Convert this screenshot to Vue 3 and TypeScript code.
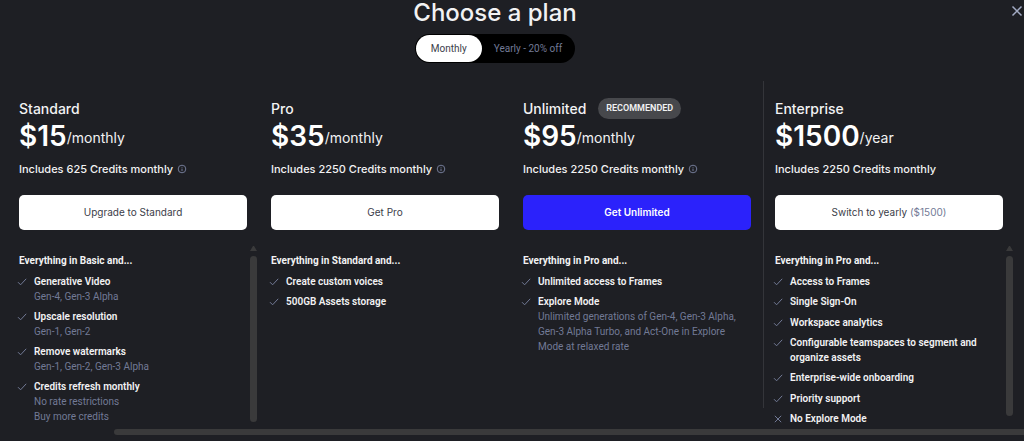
<script setup lang="ts">
import { ref } from 'vue'

interface Feature {
  title: string
  details?: string[]
  excluded?: boolean
}

interface Plan {
  id: string
  name: string
  price: string
  period: string
  credits: string
  info: boolean
  badge?: string
  action: string
  actionNote?: string
  primary?: boolean
  heading: string
  features: Feature[]
  scroll?: 'tall' | 'short'
}

const billing = ref<'monthly' | 'yearly'>('monthly')

const plans: Plan[] = [
  {
    id: 'standard',
    name: 'Standard',
    price: '$15',
    period: '/monthly',
    credits: 'Includes 625 Credits monthly',
    info: true,
    action: 'Upgrade to Standard',
    heading: 'Everything in Basic and...',
    features: [
      { title: 'Generative Video', details: ['Gen-4, Gen-3 Alpha'] },
      { title: 'Upscale resolution', details: ['Gen-1, Gen-2'] },
      { title: 'Remove watermarks', details: ['Gen-1, Gen-2, Gen-3 Alpha'] },
      { title: 'Credits refresh monthly', details: ['No rate restrictions', 'Buy more credits'] },
    ],
    scroll: 'tall',
  },
  {
    id: 'pro',
    name: 'Pro',
    price: '$35',
    period: '/monthly',
    credits: 'Includes 2250 Credits monthly',
    info: true,
    action: 'Get Pro',
    heading: 'Everything in Standard and...',
    features: [{ title: 'Create custom voices' }, { title: '500GB Assets storage' }],
  },
  {
    id: 'unlimited',
    name: 'Unlimited',
    price: '$95',
    period: '/monthly',
    credits: 'Includes 2250 Credits monthly',
    info: true,
    badge: 'RECOMMENDED',
    action: 'Get Unlimited',
    primary: true,
    heading: 'Everything in Pro and...',
    features: [
      { title: 'Unlimited access to Frames' },
      {
        title: 'Explore Mode',
        details: [
          'Unlimited generations of Gen-4, Gen-3 Alpha, Gen-3 Alpha Turbo, and Act-One in Explore Mode at relaxed rate',
        ],
      },
    ],
  },
  {
    id: 'enterprise',
    name: 'Enterprise',
    price: '$1500',
    period: '/year',
    credits: 'Includes 2250 Credits monthly',
    info: false,
    action: 'Switch to yearly',
    actionNote: '($1500)',
    heading: 'Everything in Pro and...',
    features: [
      { title: 'Access to Frames' },
      { title: 'Single Sign-On' },
      { title: 'Workspace analytics' },
      { title: 'Configurable teamspaces to segment and organize assets' },
      { title: 'Enterprise-wide onboarding' },
      { title: 'Priority support' },
      { title: 'No Explore Mode', excluded: true },
    ],
    scroll: 'short',
  },
]
</script>

<template>
  <main class="page">
    <button class="close" type="button" aria-label="Close">
      <svg viewBox="0 0 12 12" width="12" height="12" aria-hidden="true">
        <path d="M1.5 1.5 10.5 10.5M10.5 1.5 1.5 10.5" />
      </svg>
    </button>

    <header class="header">
      <h1>Choose a plan</h1>
      <div class="toggle" role="group" aria-label="Billing period">
        <button
          type="button"
          :class="{ active: billing === 'monthly' }"
          :aria-pressed="billing === 'monthly'"
          @click="billing = 'monthly'"
        >Monthly</button>
        <button
          type="button"
          :class="{ active: billing === 'yearly' }"
          :aria-pressed="billing === 'yearly'"
          @click="billing = 'yearly'"
        >Yearly - 20% off</button>
      </div>
    </header>

    <div class="plans">
      <section v-for="plan in plans" :key="plan.id" class="plan" :class="plan.id">
        <div class="name-row">
          <h2>{{ plan.name }}</h2>
          <span v-if="plan.badge" class="badge">{{ plan.badge }}</span>
        </div>
        <p class="price"><strong>{{ plan.price }}</strong><span>{{ plan.period }}</span></p>
        <p class="credits">
          <span>{{ plan.credits }}</span>
          <svg v-if="plan.info" viewBox="0 0 10 10" width="10" height="10" aria-hidden="true">
            <circle cx="5" cy="5" r="3.8" />
            <path d="M5 4.6V7.1M5 2.9V3.7" />
          </svg>
        </p>
        <button class="action" :class="{ primary: plan.primary }" type="button">
          {{ plan.action }} <span v-if="plan.actionNote">{{ plan.actionNote }}</span>
        </button>

        <div class="body">
          <div class="content">
            <h3>{{ plan.heading }}</h3>
            <ul>
              <li v-for="feature in plan.features" :key="feature.title">
                <svg viewBox="0 0 10 10" width="10" height="10" aria-hidden="true">
                  <path v-if="feature.excluded" d="M1.8 1.8 8.2 8.2M8.2 1.8 1.8 8.2" />
                  <path v-else d="M1 5.2 3.6 7.8 9.2 1.8" />
                </svg>
                <div>
                  <p class="title">{{ feature.title }}</p>
                  <p v-for="line in feature.details" :key="line" class="detail">{{ line }}</p>
                </div>
              </li>
            </ul>
          </div>
          <div v-if="plan.scroll" class="scroll" :class="plan.scroll" aria-hidden="true">
            <i class="arrow"></i>
            <i class="thumb"></i>
          </div>
        </div>
      </section>
    </div>

    <div class="h-scroll" aria-hidden="true"></div>
  </main>
</template>

<style>
body {
  margin: 0;
  background: #1e1f24;
}
</style>

<style scoped>
.page {
  position: relative;
  box-sizing: border-box;
  min-height: 100vh;
  border-bottom: 1px solid #08080a;
  background: #1e1f24;
  color: #f2f2f3;
  font-family: Inter, "Liberation Sans", sans-serif;
  font-size: 10px;
  line-height: 15px;
}

h1,
h2,
h3,
p,
ul {
  margin: 0;
  padding: 0;
}

button {
  margin: 0;
  border: 0;
  font: inherit;
  cursor: pointer;
}

svg {
  flex: none;
  fill: none;
  stroke: #727a96;
  stroke-width: 1;
}

.close {
  position: absolute;
  top: 5px;
  right: 1px;
  display: flex;
  padding: 0;
  background: none;
}

.close svg {
  stroke: #a3abc4;
  stroke-width: 1.5;
}

.header {
  display: flex;
  flex-direction: column;
  align-items: center;
  margin-right: 34px;
}

h1 {
  height: 34px;
  font-size: 24px;
  font-weight: 500;
  line-height: 25px;
}

.toggle {
  display: flex;
  box-sizing: border-box;
  height: 29px;
  padding: 1px;
  border-radius: 15px;
  background: #000;
  font-family: Roboto, "Liberation Sans", sans-serif;
}

.toggle button {
  padding: 0 12px;
  border-radius: 14px;
  background: none;
  color: #727a96;
}

.toggle .active {
  padding: 0 15px;
  background: #fff;
  color: #3b3d49;
}

.plans {
  display: grid;
  grid-template-columns: repeat(4, minmax(0, 1fr));
  gap: 24px;
  margin-top: 18px;
  padding: 0 21px 0 19px;
}

.plan {
  position: relative;
  padding-top: 16px;
}

.enterprise::before {
  position: absolute;
  top: 0;
  bottom: 18px;
  left: -12px;
  width: 1px;
  background: #34353a;
  content: "";
}

.name-row {
  display: flex;
  align-items: center;
  gap: 12px;
  height: 23px;
}

h2 {
  font-size: 14px;
  font-weight: 500;
  line-height: 20px;
}

.badge {
  padding: 3px 8px;
  border-radius: 11px;
  background: #47484c;
  font-family: Roboto, "Liberation Sans", sans-serif;
  font-size: 9px;
  font-weight: 600;
}

.price {
  display: flex;
  align-items: center;
  height: 40px;
  padding-bottom: 8px;
  box-sizing: border-box;
  line-height: 32px;
}

.price strong {
  color: #fff;
  font-size: 28px;
  font-weight: 600;
}

.price span {
  padding-top: 4px;
  font-size: 14px;
  line-height: 28px;
}

.credits {
  display: flex;
  align-items: center;
  gap: 4px;
  height: 18px;
  font-size: 11px;
  font-weight: 500;
}

.action {
  display: block;
  width: 100%;
  height: 35px;
  margin-top: 17px;
  border-radius: 5px;
  background: #fff;
  color: #3b3d49;
}

.action span {
  color: #727a96;
}

.action.primary {
  background: #2b22fb;
  color: #fff;
  font-weight: 600;
}

.body {
  display: flex;
  margin: 15px -10px 0 0;
  font-family: Roboto, "Liberation Sans", sans-serif;
}

.content {
  flex: 1;
  min-width: 0;
  margin-right: 10px;
  padding-top: 8px;
}

h3 {
  font-size: 10px;
  font-weight: 700;
}

ul {
  display: flex;
  flex-direction: column;
  gap: 5px;
  margin-top: 6px;
  list-style: none;
}

.enterprise ul {
  justify-content: space-between;
  min-height: 152px;
}

li {
  display: flex;
  gap: 7px;
  margin-left: -2px;
}

li svg {
  margin-top: 3px;
}

.title {
  font-weight: 600;
}

.detail {
  color: #727a96;
}

.scroll {
  display: flex;
  flex: none;
  flex-direction: column;
  gap: 5px;
  width: 7px;
  margin-left: -7px;
  padding-top: 1px;
}

.arrow {
  border: 3px solid transparent;
  border-top: 0;
  border-bottom: 5px solid #3a3a3b;
}

.thumb {
  height: 166px;
  border-radius: 4px;
  background: #3a3a3b;
}

.short .thumb {
  height: 160px;
}

.h-scroll {
  height: 6px;
  margin: 3px 0 6px 114px;
  border-radius: 3px 0 0 3px;
  background: #3a3a3b;
}
</style>
